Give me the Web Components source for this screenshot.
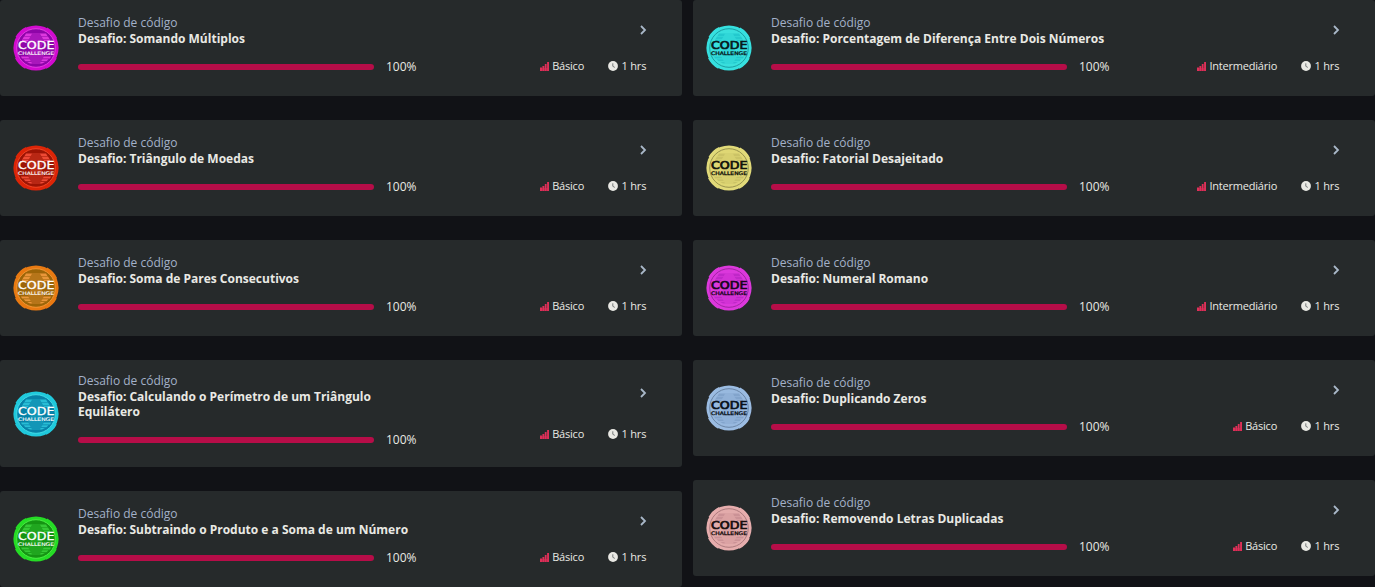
<!DOCTYPE html>
<html lang="pt-BR">
<head>
<meta charset="utf-8">
<title>Desafios de código</title>
<style>
html,body{margin:0;background:#111216;overflow:hidden}
body{font-family:"Open Sans",sans-serif;color:#e9e9e4}
</style>
</head>
<body>
<challenge-board></challenge-board>
<script>
class ChallengeBadge extends HTMLElement {
  connectedCallback() {
    const [rim, disc, stripe, ink, line] = this.getAttribute('colors').split(' ');
    const bold = ink === '#fff' ? 0 : .4;
    this.attachShadow({mode:'open'}).innerHTML = `
<style>:host{display:block;width:48px;height:48px}svg{display:block}text{font-family:"DejaVu Sans",sans-serif;font-weight:400}</style>
<svg width="48" height="48" viewBox="0 0 48 48">
<circle cx="24" cy="24" r="22.6" fill="${rim}"/>
<circle cx="24" cy="24" r="22.2" fill="none" stroke="${rim}" stroke-width="2.2" stroke-dasharray="13.95 20.92" stroke-dashoffset="-10.46"/>
<circle cx="24" cy="24" r="19.3" fill="${disc}" stroke="${line}" stroke-width=".9"/>
<path fill="${stripe}" d="M14 9.500h20l1.500 2.500h-23zM12 12.600h24l1.500 2.400h-27zM10 15.600h28v1.600H10zM9 32.500h30l-1 2H10zM11.500 35.200h25l-2 2h-21zM15 37.900h18l-3 1.600H18z"/>
<path fill="${disc}" d="M20.500 9h7l4.500 8-3 7 3 8-4.500 8h-7L16 32l3-8-3-7z"/>
<path fill="${stripe}" opacity=".35" d="M20.500 9h7l4.500 8-3 7 3 8-4.500 8h-7L16 32l3-8-3-7z"/>
<text x="6" y="25.400" font-size="10.6" textLength="36.4" lengthAdjust="spacingAndGlyphs" fill="${ink}" stroke="${ink}" stroke-width="${.3 + bold}">CODE</text>
<text x="6" y="31.300" font-size="4.9" textLength="36" lengthAdjust="spacingAndGlyphs" fill="${ink}" stroke="${ink}" stroke-width="${.1 + bold * .5}">CHALLENGE</text>
</svg>`;
  }
}
customElements.define('challenge-badge', ChallengeBadge);

class ProgressLine extends HTMLElement {
  connectedCallback() {
    this.attachShadow({mode:'open'}).innerHTML = `
<style>:host{display:flex;align-items:center;gap:12px;height:16px;font-size:12px;line-height:16px}
.bar{width:296px;height:6px;border-radius:3px;background:#b60d48}</style>
<div class="bar"></div><span><slot></slot></span>`;
  }
}
customElements.define('progress-line', ProgressLine);

class ChallengeMeta extends HTMLElement {
  connectedCallback() {
    this.attachShadow({mode:'open'}).innerHTML = `
<style>:host{display:flex;height:12px;padding-right:.8px;align-items:center;gap:24px;font-size:11px;letter-spacing:-.2px;line-height:12px;white-space:nowrap}
span{display:flex;align-items:center;gap:3.5px}svg{display:block}</style>
<span><svg width="9" height="9" viewBox="0 0 9 9"><path fill="#962346" d="M0 6h9v3H0z"/><path fill="#dd3058" d="M0 5.500h2V9H0zM2.400 4h1.900v5H2.400zM4.800 2h1.800v7H4.800zM7.100 0H9v9H7.100z"/></svg><slot name="level"></slot></span>
<span><svg width="10" height="10" viewBox="0 0 10 10"><circle cx="5" cy="5" r="4.900" fill="#e9e9e4"/><path d="M4.800 2.300v3l2 1.100" fill="none" stroke="#777b7b" stroke-width="1"/></svg><slot name="time"></slot></span>`;
  }
}
customElements.define('challenge-meta', ChallengeMeta);

class ChallengeCard extends HTMLElement {
  connectedCallback() {
    this.attachShadow({mode:'open'}).innerHTML = `
<style>
:host{display:flex;box-sizing:border-box;height:96px;background:#262a2b;border-radius:3px;padding:0 35px 0 12px}
:host([tall]){height:107px}
challenge-badge{align-self:center;margin-right:18px;flex:none}
.info{display:flex;flex-direction:column;justify-content:center;width:340px;padding-bottom:6px;box-sizing:border-box}
.kind{font-size:12px;line-height:16px;color:#a3b1c9}
h3{margin:0;font-size:12px;line-height:15px;font-weight:700}
progress-line{margin-top:13px}
.side{margin-left:auto;display:flex;flex-direction:column;justify-content:center;gap:24px;align-items:flex-end}
:host([tall]) .side{gap:29px}
.arrow{display:block}
</style>
<challenge-badge colors="${this.getAttribute('colors')}"></challenge-badge>
<div class="info"><div class="kind">Desafio de código</div><h3><slot></slot></h3><progress-line>100%</progress-line></div>
<div class="side"><svg class="arrow" width="8" height="12" viewBox="0 0 8 12"><path d="M2 2l4 4-4 4" fill="none" stroke="#a9b8c9" stroke-width="1.800"/></svg>
<challenge-meta><span slot="level">${this.getAttribute('level')}</span><span slot="time">1 hrs</span></challenge-meta></div>`;
  }
}
customElements.define('challenge-card', ChallengeCard);

class ChallengeBoard extends HTMLElement {
  connectedCallback() {
    const B = 'Básico', I = 'Intermediário';
    const columns = [[
      ['Somando Múltiplos', B, '#d20bd0 #8e05a8 #dd38df #fff #e445e3'],
      ['Triângulo de Moedas', B, '#dc2507 #9c1404 #ee4a35 #fff #f34a28'],
      ['Soma de Pares Consecutivos', B, '#e87a12 #9c6508 #e9963a #fff #f39a38'],
      ['Calculando o Perímetro de um Triângulo Equilátero', B, '#20c9dc #0782a8 #28bdd5 #fff #45dce8', true],
      ['Subtraindo o Produto e a Soma de um Número', B, '#25dc25 #159413 #36c936 #fff #50ed48']
    ], [
      ['Porcentagem de Diferença Entre Dois Números', I, '#36e0df #38dfdd #23c9ce #07191c #16979d'],
      ['Fatorial Desajeitado', I, '#e1da79 #dfd774 #cbc366 #11120b #918b48'],
      ['Numeral Romano', I, '#dc38dc #dc38dc #bf28c8 #17071b #9a229c'],
      ['Duplicando Zeros', B, '#9bbce2 #98b9df #82a4cc #091019 #647f9f'],
      ['Removendo Letras Duplicadas', B, '#e6adad #e3abab #cb9296 #170d0e #a77578']
    ]];
    this.attachShadow({mode:'open'}).innerHTML = `
<style>:host{display:grid;grid-template-columns:682px 682px;gap:11px;align-items:start}
section{display:flex;flex-direction:column;gap:24px}</style>` +
    columns.map(col => `<section>${col.map(([t,l,c,tall]) => `<challenge-card level="${l}" colors="${c}"${tall ? ' tall' : ''}>Desafio: ${t}</challenge-card>`).join('')}</section>`).join('');
  }
}
customElements.define('challenge-board', ChallengeBoard);
</script>
</body>
</html>
